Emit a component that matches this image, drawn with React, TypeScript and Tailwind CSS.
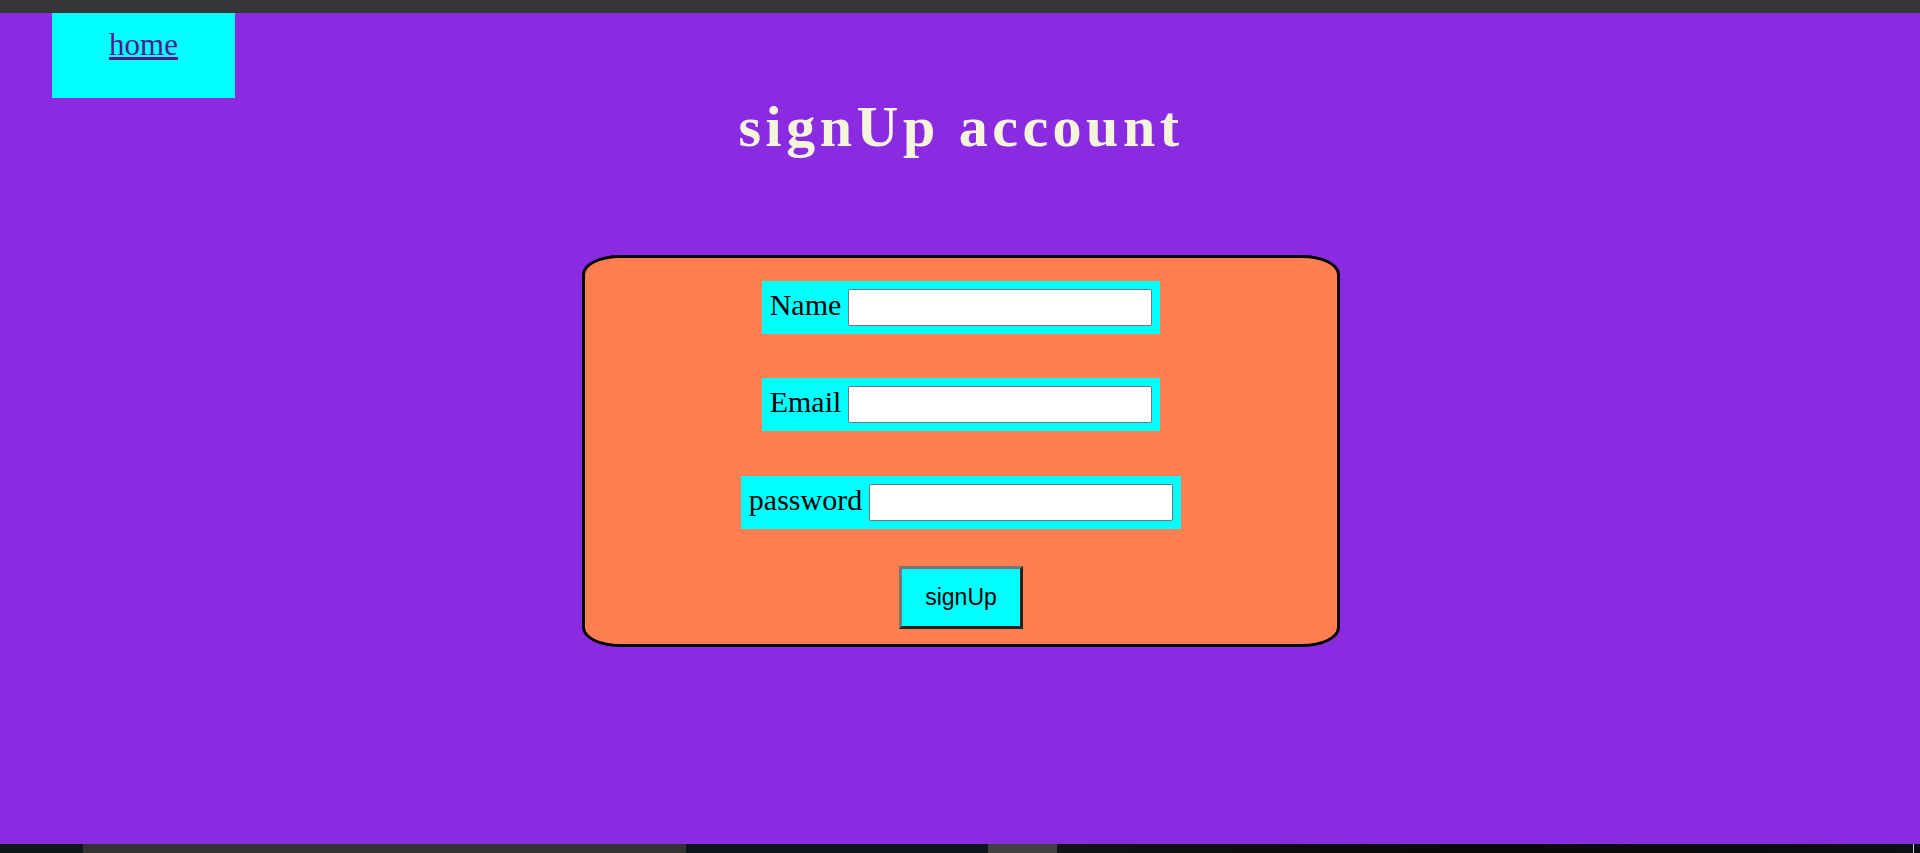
import React from "react";

export default function App() {
  const serif = { fontFamily: '"Liberation Serif", "Times New Roman", serif' };
  return (
    <div className="flex h-[853px] w-[1920px] flex-col overflow-hidden">
      <div className="h-[13px] shrink-0 bg-[#35363a]" />
      <main className="flex-1 bg-[#8a2be2] pl-[2px]" style={serif}>
        <div className="ml-[50px] h-[85px] w-[183px] bg-[#00ffff] pt-[15px] text-center">
          <a href="#" className="text-[31px] leading-[34px] text-[#551a8b] underline">
            home
          </a>
        </div>
        <h1 className="text-center text-[58px] font-bold leading-[57px] tracking-[4.5px] text-[#f5f5dc]">
          signUp account
        </h1>
        <form
          className="mx-auto mt-[100px] flex h-[392px] w-[758px] flex-col items-center rounded-[5%] border-[3px] border-black bg-[#ff7f50] pt-[23px]"
          onSubmit={(e) => e.preventDefault()}
        >
          <Row label="Name" />
          <div className="h-[44px] shrink-0" />
          <Row label="Email" />
          <div className="h-[45px] shrink-0" />
          <Row label="password" />
          <button
            type="submit"
            className="mt-[37px] h-[63px] w-[124px] shrink-0 border-[3px] border-t-[#767676] border-l-[#767676] border-r-[#222222] border-b-[#222222] bg-[#00ffff] text-[23px] text-black"
            style={{ fontFamily: '"Liberation Sans", Arial, sans-serif' }}
          >
            signUp
          </button>
        </form>
      </main>
      <div className="flex h-[9px] shrink-0">
        <div className="w-[83px] bg-[#10171b]" />
        <div className="w-[603px] bg-[#333333]" />
        <div className="w-[302px] bg-[#0d161a]" />
        <div className="w-[69px] bg-[#3f4143]" />
        <div className="w-[856px] bg-gradient-to-r from-[#101416] via-[#080808] to-[#0b1014]" />
        <div className="w-[1px] bg-[#cfcfcf]" />
        <div className="flex-1 bg-[#0b1014]" />
      </div>
    </div>
  );
}

function Row({ label }: { label: string }) {
  return (
    <div className="flex h-[53px] shrink-0 items-center gap-[7px] bg-[#00ffff] px-[8px]">
      <label className="mb-[5px] text-[30px] leading-none text-black">{label}</label>
      <input
        type="text"
        className="h-[37px] w-[304px] rounded-[2px] border border-[#767676] bg-white"
      />
    </div>
  );
}
